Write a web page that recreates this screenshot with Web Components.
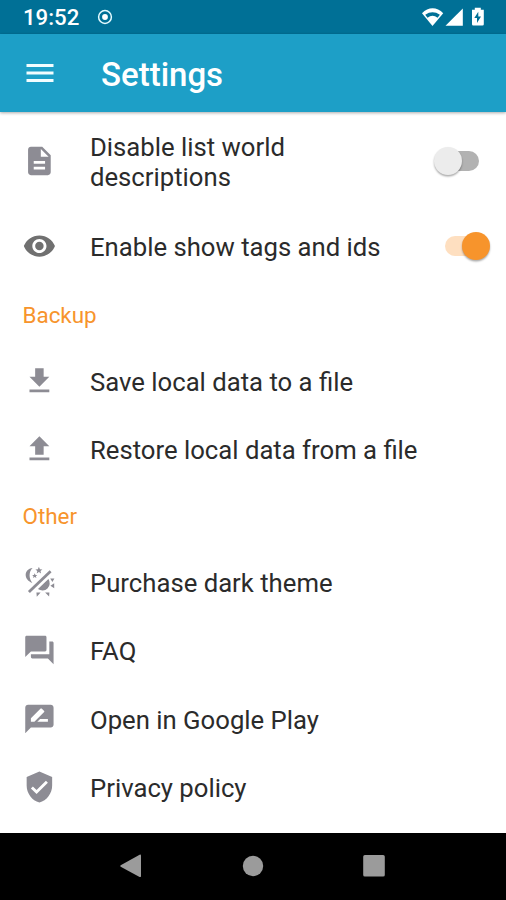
<!DOCTYPE html>
<html lang="en">
<head>
<meta charset="utf-8">
<title>Settings</title>
<style>
html,body{margin:0;height:100%;background:#fff;font-family:Roboto,sans-serif;color:#2b2b2b}
body{overflow:hidden}
</style>
</head>
<body>
<settings-screen></settings-screen>
<script>
function define(name, html, setup) {
  customElements.define(name, class extends HTMLElement {
    connectedCallback() {
      if (this.shadowRoot) return;
      const t = document.createElement('template');
      t.innerHTML = html;
      this.attachShadow({ mode: 'open' }).appendChild(t.content.cloneNode(true));
      if (setup) setup(this);
    }
  });
}

const icons = {
  doc: '<path d="M14 2H6c-1.1 0-2 .9-2 2v16c0 1.1.9 2 2 2h12c1.1 0 2-.9 2-2V8l-6-6zm2 16H8v-2h8v2zm0-4H8v-2h8v2zm-3-5V3.5L18.5 9H13z"/>',
  eye: '<path d="M12 4.5C7 4.5 2.73 7.61 1 12c1.73 4.39 6 7.5 11 7.5s9.27-3.11 11-7.5c-1.73-4.39-6-7.5-11-7.5zM12 17c-2.76 0-5-2.24-5-5s2.24-5 5-5 5 2.24 5 5-2.24 5-5 5zm0-8c-1.66 0-3 1.34-3 3s1.34 3 3 3 3-1.34 3-3-1.34-3-3-3z"/>',
  save: '<path d="M19 9h-4V3H9v6H5l7 7 7-7zM5 18v2h14v-2H5z"/>',
  restore: '<path d="M9 16h6v-6h4l-7-7-7 7h4v6zm-4 2h14v2H5v-2z"/>',
  faq: '<path d="M21 6h-2v9H6v2c0 .55.45 1 1 1h11l4 4V7c0-.55-.45-1-1-1zm-4 6V3c0-.55-.45-1-1-1H3c-.55 0-1 .45-1 1v14l4-4h10c.55 0 1-.45 1-1z"/>',
  review: '<path d="M20 2H4c-1.1 0-1.99.9-1.99 2L2 22l4-4h14c1.1 0 2-.9 2-2V4c0-1.1-.9-2-2-2zM6 14v-2.47l6.88-6.88c.2-.2.51-.2.71 0l1.77 1.77c.2.2.2.51 0 .71L8.47 14H6zm12 0h-7.5l2-2H18v2z"/>',
  shield: '<path d="M12 1L3 5v6c0 5.55 3.84 10.74 9 12 5.16-1.26 9-6.45 9-12V5l-9-4zm-2 16l-4-4 1.41-1.41L10 14.17l6.59-6.59L18 9l-8 8z"/>',
  menu: '<path d="M3 18h18v-2H3v2zm0-5h18v-2H3v2zm0-7v2h18V6H3z"/>',
  theme: '<g transform="scale(.70588)"><path d="M10.200 3.100C1.300 3.800.8 15 9.900 17.900C6.300 13.500 6.200 7 10.200 3.100Z"/><path d="M16.500 1.800l1 2.400 2.500.2-1.900 1.600.6 2.500-2.200-1.400-2.200 1.400.6-2.500-1.900-1.600 2.500-.2zM12.300 8.200l.8 1.700 1.800.2-1.400 1.200.5 1.800-1.700-1-1.700 1 .5-1.800-1.400-1.200 1.800-.2z"/><path d="M6.500 27L28.200 6.200" fill="none" stroke="currentColor" stroke-width="2.800"/><path d="M26 14A7.300 7.300 0 0 1 15.600 24ZM27.800 13.500h4.200l-2 3.400zM28 20.800l3.800 2.500v-5zM22.700 27.500h4.300l-.3 4zM14 27.500h4.200l-3.800 4.300z"/></g>'
};

define('ui-icon', `<style>
:host{display:block;width:34px;height:34px;flex:none;color:#8d8c94}
svg{display:block;width:100%;height:100%;fill:currentColor}</style><svg viewBox="0 0 24 24"></svg>`,
  el => { el.shadowRoot.querySelector('svg').innerHTML = icons[el.getAttribute('name')]; });

define('status-bar', `<style>
:host{display:flex;height:34px;box-sizing:border-box;background:#007096;color:#fff;align-items:center;padding:0 21px 0 23px}
.time{font-size:22.2px;font-weight:500;line-height:34px}
.rec{width:16px;height:16px;margin-left:17.500px}
.sys{margin-left:auto;display:block;width:64px;height:22px}
</style><span class="time">19:52</span>
<svg class="rec" viewBox="0 0 16 16"><circle cx="8" cy="8" r="6.400" fill="none" stroke="#e4fbff" stroke-width="1.500"/><circle cx="8" cy="8" r="2.900" fill="#fff"/></svg>
<svg class="sys" viewBox="421 6 64 22"><g fill="#fff"><path d="M432.500 26L422 13.200C428.200 6.600 437 6.600 443.200 13.200Z"/><path d="M445.500 25.700L462.800 8.500V25.700Z"/><path d="M474.800 7.700h6v2.100h3v14.400q0 1.300-1.300 1.300h-9.200q-1.300 0-1.300-1.300V9.800h2.800z"/></g><path d="M425.200 14.800Q432.500 9.900 439.900 14.800L437.600 17.800Q432.500 13.700 427.500 17.800Z" fill="#007096"/><path d="M478.300 11.800l-4 6.300h2.700v4.800l4-6.500h-2.700z" fill="#007096"/></svg>`);

define('app-bar', `<style>
:host{display:flex;align-items:center;box-sizing:border-box;height:78px;background:#1d9fc7;color:#fff;padding:0 22px;gap:45px;box-shadow:0 1px 3px #0005;flex:none}
h1{margin:4px 0 0;font-size:33px;font-weight:500;line-height:40px}
ui-icon{color:#f2fdff;width:36px;height:36px;margin:0 -1.500px 0 -.5px}
</style><ui-icon name="menu"></ui-icon><h1><slot></slot></h1>`);

define('section-title', `<style>
:host{display:flex;align-items:center;box-sizing:border-box;height:66px;padding:2px 0 0 22.500px;color:#f7942c;font-size:22.400px}
:host([compact]){height:64.500px;padding:0 0 1px 22.500px}
</style><slot></slot>`);

define('toggle-switch', `<style>
:host{display:block;position:relative;width:56px;height:28px;margin-left:auto;flex:none;top:-1px}
.track{position:absolute;top:4px;left:6px;width:39px;height:20px;border-radius:10px;background:#b2b2b2}
.thumb{position:absolute;top:0;left:0;width:28px;height:28px;border-radius:50%;background:#ececec;box-shadow:0 1.500px 2px #0005}
:host([on]) .track{left:11px;background:#fedfc0}
:host([on]) .thumb{left:28px;background:#f7942c}
</style><div class="track"></div><div class="thumb"></div>`);

define('setting-row', `<style>
:host{display:flex;align-items:center;box-sizing:border-box;height:68.400px;padding:0 16px 0 22px;gap:34px}
:host([tall]){height:101px;padding-bottom:2px}
ui-icon{transform:translate(.4px,-1px)}
:host([dark]) ui-icon{color:#707070}
.text{font-size:25.700px;line-height:30px;max-width:270px;white-space:nowrap}
:host([tall]) .text{white-space:normal}
</style><ui-icon></ui-icon><div class="text"><slot></slot></div><slot name="control"></slot>`,
  el => {
    const old = el.shadowRoot.querySelector('ui-icon');
    const icon = document.createElement('ui-icon');
    icon.setAttribute('name', el.getAttribute('icon'));
    old.replaceWith(icon);
  });

define('nav-bar', `<style>
:host{display:flex;justify-content:space-between;align-items:center;box-sizing:border-box;height:67px;background:#000;padding:0 120px 1px 119px;flex:none}
svg{display:block;width:24px;height:24px;fill:#9b9b9b}
</style>
<svg viewBox="0 0 24 24"><path d="M1.700 11.200L20.600.7Q22 .2 22 1.500V22.300Q22 23.500 20.600 22.900L1.700 12.700Q.7 12 1.700 11.200Z"/></svg>
<svg viewBox="0 0 24 24"><circle cx="12" cy="12" r="10.200"/></svg>
<svg viewBox="0 0 24 24"><rect x="1.200" y="1" width="21.600" height="21.600" rx="1.700"/></svg>`);

define('settings-screen', `<style>
:host{display:flex;flex-direction:column;height:900px;width:506px}
status-bar{flex:none}
app-bar{position:relative}
main{flex:1;min-height:0;overflow:hidden}
</style>
<status-bar></status-bar><app-bar>Settings</app-bar>
<main>
<setting-row icon="doc" tall>Disable list world descriptions<toggle-switch slot="control"></toggle-switch></setting-row>
<setting-row icon="eye" dark>Enable show tags and ids<toggle-switch slot="control" on></toggle-switch></setting-row>
<section-title>Backup</section-title>
<setting-row icon="save">Save local data to a file</setting-row>
<setting-row icon="restore">Restore local data from a file</setting-row>
<section-title compact>Other</section-title>
<setting-row icon="theme">Purchase dark theme</setting-row>
<setting-row icon="faq">FAQ</setting-row>
<setting-row icon="review">Open in Google Play</setting-row>
<setting-row icon="shield">Privacy policy</setting-row>
</main>
<nav-bar></nav-bar>`);
</script>
</body>
</html>
